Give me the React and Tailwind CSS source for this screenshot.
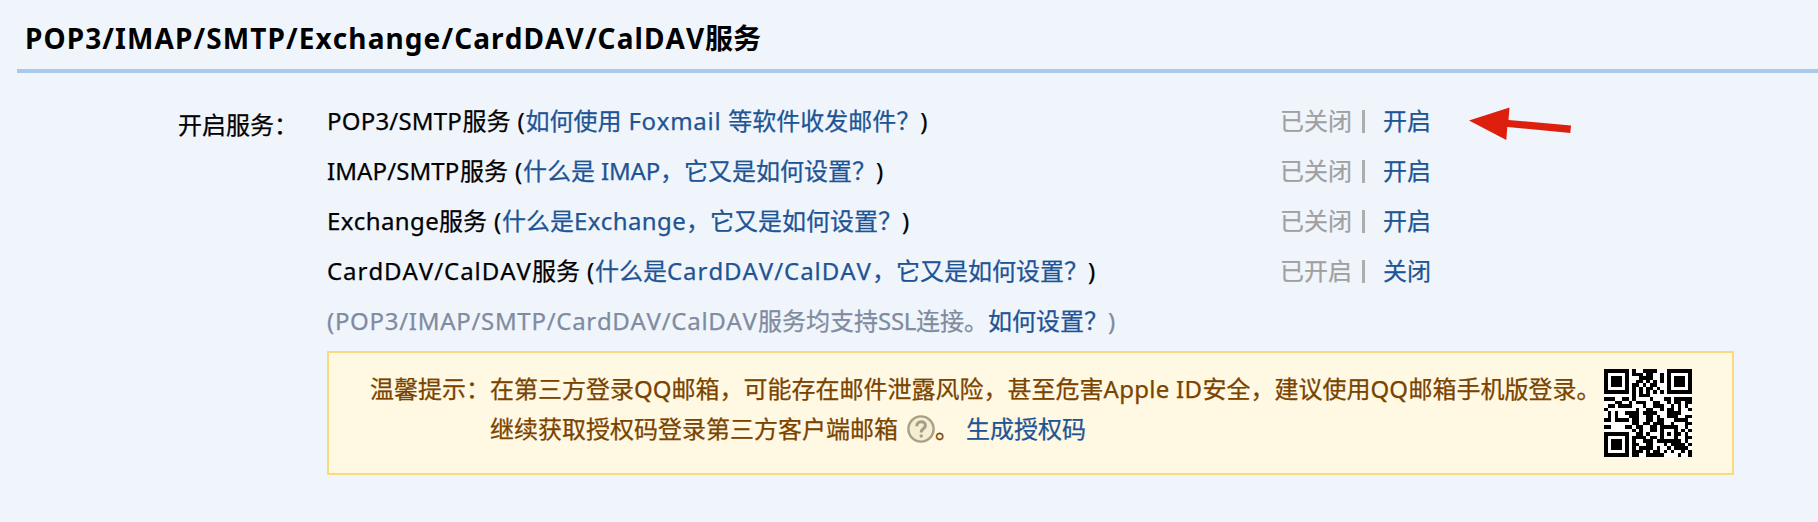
const QR = [
  "#######.#..####...#######",
  "#.....#.###.##..#.#.....#",
  "#.###.#...####..#.#.###.#",
  "#.###.#..##.#.#.#.#.###.#",
  "#.###.#.##.#.##...#.###.#",
  "#.....#.#.#.##.#..#.....#",
  "#######.#.#.#.#.#.#######",
  "........#.###............",
  "###..##.#....#...##.#####",
  "...##..#.###..##..#.##.##",
  ".##.####...#..###..#.#.#.",
  "#........#..##..#.##.#..#",
  ".#.#..####.####...####...",
  ".#.#...###..##.#..###..##",
  "##.####.##..##.##...####.",
  "........##.##.###..#...##",
  "##....##.##..##.#####..#.",
  "........#.#..##.#...#.#.#",
  "#######..##.#...#.#.##.#.",
  "#.....#.####.##.#...#..##",
  "#.###.#.#..###.#######.#.",
  "#.###.#.##..##...#.####.#",
  "#.###.#.#.####.#..#.####.",
  "#.....#.###.#.##.#.#..#.#",
  "#######.##..#####....#..#",
];

const qrPath = QR.map((row, y) =>
  [...row].map((c, x) => (c === "#" ? `M${x} ${y}h1v1h-1z` : "")).join("")
).join("");

function Latin({ className, children }) {
  return <span className={`inline-block whitespace-pre ${className}`}>{children}</span>;
}

function Link({ children }) {
  return (
    <a href="#" className="text-[#1e5494]">
      {children}
    </a>
  );
}

function Paren() {
  return <Latin className="w-[15px] tracking-[0.7px]">{" ("}</Latin>;
}

function Row({ status, action, children }) {
  return (
    <li className="flex h-[50px] items-center">
      <div className="w-[953px] whitespace-nowrap">{children}</div>
      <div className="flex items-center">
        <span className="w-[81.5px] text-[#a0a0a0]">{status}</span>
        <span className="h-[23px] w-[3px] bg-[#acadaf]" />
        <span className="ml-[18.5px]">
          <Link>{action}</Link>
        </span>
      </div>
    </li>
  );
}

export default function App() {
  return (
    <main
      className="h-[522px] overflow-hidden bg-[#f0f5fc] pl-[17px] font-['Noto_Sans','Noto_Sans_CJK_SC',sans-serif] text-[24px] text-black [font-kerning:none] [-webkit-text-stroke:0.25px]"
      lang="zh-CN"
    >
      <h1 className="flex h-[73px] items-center border-b-4 border-[#a9c9ec] pl-[8px] pt-[6px] text-[28px] font-bold leading-[40px] [-webkit-text-stroke:0px]">
        <Latin className="w-[680px] tracking-[1.1px]">POP3/IMAP/SMTP/Exchange/CardDAV/CalDAV</Latin>服务
      </h1>
      <div className="flex pt-[23px]">
        <div className="w-[310px] pl-[161px] pt-[4px] leading-[50px]">开启服务：</div>
        <div>
          <ul className="leading-[50px]">
            <Row status="已关闭" action="开启">
              <Latin className="w-[135.5px] tracking-[0.2px]">POP3/SMTP</Latin>服务<Paren />
              <Link>如何使用<Latin className="w-[106.7px] tracking-[0.7px]">{" Foxmail "}</Latin>等软件收发邮件？</Link>)
            </Row>
            <Row status="已关闭" action="开启">
              <Latin className="w-[133px] tracking-[0.1px]">IMAP/SMTP</Latin>服务<Paren />
              <Link>什么是<Latin className="w-[65px] tracking-[-0.2px]">{" IMAP"}</Latin>，它又是如何设置？</Link>)
            </Row>
            <Row status="已关闭" action="开启">
              <Latin className="w-[112px] tracking-[0.4px]">Exchange</Latin>服务<Paren />
              <Link>什么是<Latin className="w-[112px] tracking-[0.4px]">Exchange</Latin>，它又是如何设置？</Link>)
            </Row>
            <Row status="已开启" action="关闭">
              <Latin className="w-[205px] tracking-[0.95px]">CardDAV/CalDAV</Latin>服务<Paren />
              <Link>什么是<Latin className="w-[205px] tracking-[0.95px]">CardDAV/CalDAV</Latin>，它又是如何设置？</Link>)
            </Row>
            <li className="h-[50px] whitespace-nowrap text-[#7f8ba0]">
              <Latin className="w-[431px] tracking-[0.7px]">(POP3/IMAP/SMTP/CardDAV/CalDAV</Latin>服务均支持
              <Latin className="w-[38px] tracking-[-0.3px]">SSL</Latin>连接。<Link>如何设置？</Link>)
            </li>
          </ul>
          <section className="mt-[5px] flex h-[124px] w-[1407px] border-2 border-[#fadb7c] bg-[#fff8e2] pl-[41px] pt-[16px] leading-[40px] text-[#7a4300]">
            <div className="w-[120px] whitespace-nowrap">温馨提示：</div>
            <div className="w-[1114px] whitespace-nowrap">
              <p>
                在第三方登录<Latin className="w-[37.5px]">QQ</Latin>邮箱，可能存在邮件泄露风险，甚至危害
                <Latin className="w-[99px] tracking-[0.3px]">Apple ID</Latin>安全，建议使用<Latin className="w-[38px]">QQ</Latin>邮箱手机版登录。
              </p>
              <p className="flex items-center">
                继续获取授权码登录第三方客户端邮箱
                <svg viewBox="0 0 28 28" className="ml-[9px] size-7" fill="none">
                  <circle cx="14" cy="14" r="12.6" fill="#f5eed0" stroke="#a5a087" strokeWidth="2.4" />
                  <path d="M9.8 11.2c0-6 8.6-5.6 8.6-.8 0 3.2-4.2 3-4.2 7M14.2 19.4v3" stroke="#a39e8b" strokeWidth="3" />
                </svg>
                <span className="mr-[7px]">。</span>
                <Link>生成授权码</Link>
              </p>
            </div>
            <svg viewBox="0 0 25 25" className="size-[88px] bg-white" shapeRendering="crispEdges">
              <path d={qrPath} fill="#000" />
            </svg>
          </section>
        </div>
      </div>
      <svg className="absolute left-[1469px] top-[107px] h-[34px] w-[103px]" viewBox="0 0 103 34">
        <path d="M0 13.5L40.5 .5L39.5 13L102 18.5L101.3 26L38.3 20L37.3 33Z" fill="#dc200d" />
      </svg>
    </main>
  );
}
